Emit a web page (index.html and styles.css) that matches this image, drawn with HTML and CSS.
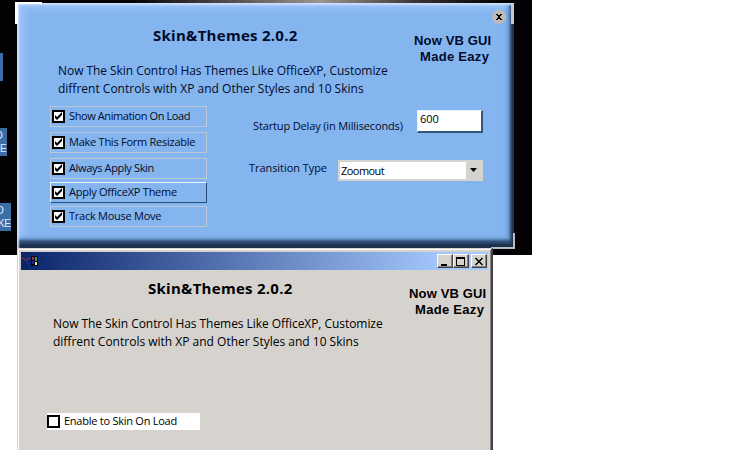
FILE: index.html
```html
<!DOCTYPE html>
<html lang="en">
<head>
<meta charset="utf-8">
<title>Skin&amp;Themes 2.0.2</title>
<link rel="stylesheet" href="styles.css">
</head>
<body>
<main class="screen">
  <div class="desktop">
    <span class="icon-label first"></span>
    <span class="icon-label second"><span class="letter">O</span><br>E</span>
    <span class="icon-label third"><span class="letter">O</span><br><span class="pair">KE</span></span>
  </div>
  <section class="skin-window">
    <i class="corner top-left"></i><i class="corner top-right"></i><i class="corner bottom-right"></i>
    <button class="round-close" aria-label="Close"><svg width="14" height="14" viewBox="0 0 14 14"><path d="M4 4h2v1h2V4h2v1H9v1H8v2h1v1h1v1H8V9H6v1H4V9h1V8h1V6H5V5H4z"/></svg></button>
    <header class="intro">
      <div class="copy">
        <h1>Skin&amp;Themes 2.0.2</h1>
        <p><span class="line-one">Now The Skin Control Has Themes Like OfficeXP, Customize</span><br><span class="line-two">diffrent Controls with XP and Other Styles and 10 Skins</span></p>
      </div>
      <strong class="brand">Now VB GUI<br><span>Made Eazy</span></strong>
    </header>
    <div class="settings">
      <div class="options">
        <label class="option"><span class="box"><svg width="9" height="9" viewBox="0 0 9 9"><path d="M1 3v3l2 2 5-5V0L3 5z"/></svg></span><span class="w1">Show Animation On Load</span></label>
        <label class="option"><span class="box"><svg width="9" height="9" viewBox="0 0 9 9"><path d="M1 3v3l2 2 5-5V0L3 5z"/></svg></span><span class="w2">Make This Form Resizable</span></label>
        <label class="option"><span class="box"><svg width="9" height="9" viewBox="0 0 9 9"><path d="M1 3v3l2 2 5-5V0L3 5z"/></svg></span><span class="w3">Always Apply Skin</span></label>
        <label class="option active"><span class="box"><svg width="9" height="9" viewBox="0 0 9 9"><path d="M1 3v3l2 2 5-5V0L3 5z"/></svg></span><span class="w4">Apply OfficeXP Theme</span></label>
        <label class="option"><span class="box"><svg width="9" height="9" viewBox="0 0 9 9"><path d="M1 3v3l2 2 5-5V0L3 5z"/></svg></span><span class="w5">Track Mouse Move</span></label>
      </div>
      <div class="fields">
        <div class="field delay"><span class="name">Startup Delay (in Milliseconds)</span><span class="input">600</span></div>
        <div class="field transition"><span class="name">Transition Type</span><span class="select"><span class="value">Zoomout</span><span class="arrow"><svg width="9" height="5" viewBox="0 0 9 5"><path d="M1 0h7L4.5 4z"/></svg></span></span></div>
      </div>
    </div>
  </section>
  <section class="classic-window">
    <div class="titlebar">
      <svg class="app-icon" width="18" height="12" viewBox="0 0 18 12" shape-rendering="crispEdges"><path fill="#08081c" d="M10 1h7v10h-7z"/><path fill="#a62b38" d="M1 3h2v1H1zM3 4h2v1H3zM6 3h3v1H6zM5 5h2v1H5zM11 2h2v3h-2z"/><path fill="#202498" d="M2 7h2v1H2zM5 8h3v1H5zM11 6h2v3h-2z"/><path fill="#39985d" d="M14 2h2v4h-2z"/><path fill="#f3f05b" d="M14 7h2v3h-2z"/></svg>
      <div class="window-buttons">
        <button aria-label="Minimize"><svg width="13" height="11"><path d="M3 8h6v2H3z"/></svg></button>
        <button aria-label="Maximize"><svg width="13" height="11"><path fill-rule="evenodd" d="M2 1h9v9H2zm1 2v6h7V3z"/></svg></button>
        <button class="close" aria-label="Close"><svg width="13" height="11"><path d="m3.5 2 7 7m0-7-7 7" fill="none" stroke="#000" stroke-width="1.5"/></svg></button>
      </div>
    </div>
    <header class="intro">
      <div class="copy">
        <h1>Skin&amp;Themes 2.0.2</h1>
        <p><span class="line-one">Now The Skin Control Has Themes Like OfficeXP, Customize</span><br><span class="line-two">diffrent Controls with XP and Other Styles and 10 Skins</span></p>
      </div>
      <strong class="brand">Now VB GUI<br><span>Made Eazy</span></strong>
    </header>
    <label class="enable"><span class="box"></span><span class="w6">Enable to Skin On Load</span></label>
  </section>
</main>
</body>
</html>
```
FILE: styles.css
```css
* { box-sizing: border-box; }
body { margin: 0; background: #fff; color: #000; font: 11px/14px "Open Sans", sans-serif; }
.screen { position: relative; width: 733px; height: 450px; overflow: hidden; }
.desktop { width: 532px; height: 255px; background: linear-gradient(90deg, transparent 130px, #9c9490 320px, #363231 420px, transparent 500px) 0 0 / 100% 5px no-repeat, #030103; }
.icon-label { position: absolute; left: 0; background: #3b6ea5; color: #e2edf8; font: 10px/13px "Liberation Sans", sans-serif; }
.first { top: 53px; width: 3px; height: 28px; }
.second { top: 128px; width: 7px; height: 28px; padding-top: 1px; text-indent: -1px; }
.third { top: 203px; width: 11px; height: 28px; padding-top: 1px; }
.letter { margin-left: -4px; }
.pair { margin-left: -2px; letter-spacing: -.5px; }
.skin-window { position: absolute; left: 17px; top: 3px; width: 497px; height: 245px; padding-top: 23px; color: #020b2a; background: #84b5ef; box-shadow: inset 2px 2px 2px #cedfff, inset -2px -4px 2px #1c2f4a, inset -4px -8px 3px #2c486d, inset -7px -10px 4px #6c9cd4, inset 8px 6px 6px #9bc1f6; }
.corner { position: absolute; border: 0 solid #fff; }
.top-left { left: -2px; top: -1px; width: 27px; height: 22px; border-width: 2px 0 0 3px; }
.top-right { right: 0; top: 1px; width: 4px; height: 20px; border-right: 3px solid #c7c9cf; }
.bottom-right { right: -1px; bottom: -1px; width: 24px; height: 16px; border: solid #babcc2; border-width: 0 2px 2px 0; }
.round-close { position: absolute; right: 8px; top: 7px; width: 14px; height: 14px; padding: 0; border: 0; border-radius: 50%; background: #bebbb6; }
button svg, .box svg, .arrow svg { display: block; }
svg { flex: none; }
.intro { display: flex; align-items: flex-start; }
.copy { width: 370px; flex: none; padding-left: 41px; }
h1 { width: 146px; margin: 0 0 18px 95px; font: 700 15px/18px "Open Sans", sans-serif; letter-spacing: .28px; white-space: nowrap; }
p { margin: 0; font-size: 12px; line-height: 18px; white-space: nowrap; }
.line-one { letter-spacing: -.055px; }
.line-two { letter-spacing: 0; }
.brand { padding: 7px 0 0 27px; font: 700 13px/16px "Liberation Sans", sans-serif; letter-spacing: .15px; white-space: nowrap; }
.brand span { padding-left: 6px; letter-spacing: .3px; }
.settings { display: flex; margin: 8px 0 0 33px; }
.options { display: grid; width: 157px; grid-template-rows: 26px 26px 24px 24px 21px; flex: none; }
.option { display: flex; align-items: center; height: 21px; padding-left: 1px; border: 1px solid #bac8d8; white-space: nowrap; }
.option > span:last-child { padding-bottom: 2px; }
.active { border-color: #eef5ff #244a75 #244a75 #eef5ff; }
.w1 { letter-spacing: -.4px; }
.w2 { letter-spacing: -.25px; }
.w3 { letter-spacing: -.35px; }
.w4, .w5, .w6 { letter-spacing: -.25px; }
.w6 { padding-bottom: 1px; }
.box { flex: none; width: 13px; height: 13px; margin-right: 4px; border: 2px solid #000; background: #fff; }
.fields { width: 234px; margin-left: 42px; padding-top: 4px; }
.field { display: flex; justify-content: space-between; white-space: nowrap; }
.delay { height: 50px; }
.delay .name { padding: 9px 0 0 4px; letter-spacing: -.14px; }
.input { width: 66px; height: 23px; padding: 1px 2px; border: 1px solid #e7f4ff; border-right: 2px solid #31557b; border-bottom: 2px solid #31557b; background: #fff; color: #000; }
.transition .name { padding-top: 1px; letter-spacing: -.06px; }
.select { display: flex; width: 145px; height: 21px; border: 2px solid #d5d3ce; background: #fff; color: #000; line-height: 17px; }
.value { flex: 1; padding-left: 1px; letter-spacing: -.55px; }
.arrow { width: 15px; padding: 6px 3px; background: #d5d3ce; }
.classic-window { position: absolute; left: 17px; top: 248px; width: 476px; height: 203px; padding: 3px 3px 0; border: 1px solid #d6d3ce; border-right: 2px solid #424242; background: #d6d3ce; box-shadow: inset 1px 1px #fff, inset -1px 0 #848284; }
.titlebar { display: flex; align-items: center; justify-content: space-between; height: 18px; background: linear-gradient(90deg, #0a246a, #a6caff 92%); }
.window-buttons { display: flex; padding-right: 1px; }
.window-buttons button { width: 16px; height: 14px; padding: 0; border: 1px solid #fff; border-right-color: #424242; border-bottom-color: #424242; background: #d6d3ce; box-shadow: inset -1px -1px #848284; }
.window-buttons .close { margin-left: 2px; }
.classic-window .intro { padding-top: 9px; }
.classic-window .copy { padding-left: 32px; width: 361px; }
.enable { display: flex; align-items: center; width: 153px; height: 17px; margin: 62px 0 0 26px; background: #fff; white-space: nowrap; }
```
